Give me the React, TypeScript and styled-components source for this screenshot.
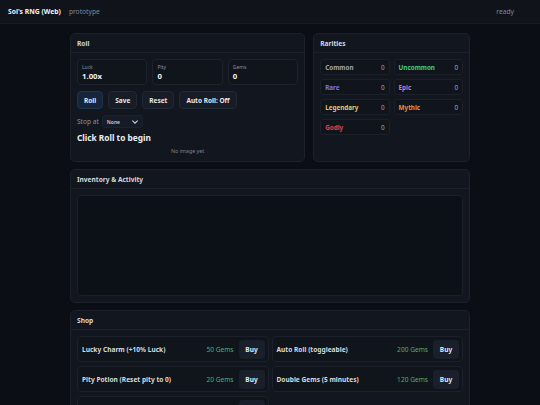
import styled, { createGlobalStyle } from 'styled-components';

const GlobalStyle = createGlobalStyle`
  html, body {
    margin: 0;
    padding: 0;
    background: #0b0e14;
    color: #e5e7eb;
    font-family: "Noto Sans", "Open Sans", sans-serif;
  }
  * { box-sizing: border-box; }
`;

type Rarity = { name: string; color: string; count: number };

const rarities: Rarity[] = [
  { name: 'Common', color: '#a0a6b0', count: 0 },
  { name: 'Uncommon', color: '#3fcf8e', count: 0 },
  { name: 'Rare', color: '#7c74e8', count: 0 },
  { name: 'Epic', color: '#c27cc6', count: 0 },
  { name: 'Legendary', color: '#e7c46e', count: 0 },
  { name: 'Mythic', color: '#e8913f', count: 0 },
  { name: 'Godly', color: '#e0434f', count: 0 },
];

const shopItems = [
  { name: 'Lucky Charm (+10% Luck)', price: 50 },
  { name: 'Auto Roll (toggleable)', price: 200 },
  { name: 'Pity Potion (Reset pity to 0)', price: 20 },
  { name: 'Double Gems (5 minutes)', price: 120 },
  { name: 'Super Luck (+50% Luck, 1 roll)', price: 300 },
];

const App = () => {
  return (
    <>
      <GlobalStyle />
      <TopBar>
        <Brand>
          <span className="title">Sol's RNG (Web)</span>
          <span className="sub">prototype</span>
        </Brand>
        <Status>ready</Status>
      </TopBar>

      <Main>
        <TopGrid>
          <Card>
            <CardHeader>Roll</CardHeader>
            <CardBody>
              <StatsRow>
                <StatBox>
                  <span className="label">Luck</span>
                  <span className="value">1.00x</span>
                </StatBox>
                <StatBox>
                  <span className="label">Pity</span>
                  <span className="value">0</span>
                </StatBox>
                <StatBox>
                  <span className="label">Gems</span>
                  <span className="value">0</span>
                </StatBox>
              </StatsRow>

              <ButtonRow>
                <Button $primary>Roll</Button>
                <Button>Save</Button>
                <Button>Reset</Button>
                <Button>Auto Roll: Off</Button>
              </ButtonRow>

              <StopRow>
                <span>Stop at</span>
                <FakeSelect>
                  <span>None</span>
                  <svg width="6" height="4" viewBox="0 0 10 6">
                    <path
                      d="M1 1l4 4 4-4"
                      fill="none"
                      stroke="#c8ccd4"
                      strokeWidth="1.8"
                      strokeLinecap="round"
                    />
                  </svg>
                </FakeSelect>
              </StopRow>

              <ResultTitle>Click Roll to begin</ResultTitle>
              <NoImage>No image yet</NoImage>
            </CardBody>
          </Card>

          <Card>
            <CardHeader>Rarities</CardHeader>
            <CardBody>
              <RarityGrid>
                {rarities.map((r) => (
                  <RarityCell key={r.name} $color={r.color}>
                    <span className="name">{r.name}</span>
                    <span className="count">{r.count}</span>
                  </RarityCell>
                ))}
              </RarityGrid>
            </CardBody>
          </Card>
        </TopGrid>

        <Card>
          <CardHeader>Inventory &amp; Activity</CardHeader>
          <CardBody>
            <InventoryArea />
          </CardBody>
        </Card>

        <Card>
          <CardHeader>Shop</CardHeader>
          <CardBody>
            <ShopGrid>
              {shopItems.map((item) => (
                <ShopItem key={item.name}>
                  <span className="name">{item.name}</span>
                  <span className="price">{item.price} Gems</span>
                  <BuyButton>Buy</BuyButton>
                </ShopItem>
              ))}
            </ShopGrid>
          </CardBody>
        </Card>
      </Main>
    </>
  );
};

const TopBar = styled.header`
  height: 24px;
  display: flex;
  align-items: center;
  justify-content: space-between;
  padding: 0 26px 0 8px;
  background: #10131a;
  border-bottom: 1px solid #161a22;
`;

const Brand = styled.div`
  display: flex;
  align-items: center;
  gap: 8px;
  .title {
    font-size: 6.8px;
    font-weight: 700;
    color: #f1f3f6;
  }
  .sub {
    font-size: 6.7px;
    color: #7f8794;
  }
`;

const Status = styled.span`
  font-size: 6.7px;
  color: #7f8794;
`;

const Main = styled.main`
  max-width: 400px;
  margin: 0 auto;
  padding: 9px 0 12px;
  display: flex;
  flex-direction: column;
  gap: 7px;
`;

const TopGrid = styled.div`
  display: grid;
  grid-template-columns: 3fr 2fr;
  gap: 8px;
`;

const Card = styled.section`
  background: #12161e;
  border: 1px solid #1c212c;
  border-radius: 5px;
  display: flex;
  flex-direction: column;
`;

const CardHeader = styled.div`
  height: 19px;
  display: flex;
  align-items: center;
  padding: 0 6px;
  font-size: 6.6px;
  font-weight: 700;
  color: #d3d7de;
  border-bottom: 1px solid #1c212c;
`;

const CardBody = styled.div`
  padding: 6px;
  display: flex;
  flex-direction: column;
`;

const StatsRow = styled.div`
  display: grid;
  grid-template-columns: repeat(3, 1fr);
  gap: 5px;
`;

const StatBox = styled.div`
  height: 26px;
  border: 1px solid #1d222d;
  border-radius: 4px;
  background: #10141b;
  padding: 3px 4px;
  display: flex;
  flex-direction: column;
  justify-content: center;
  .label {
    font-size: 5px;
    color: #8a919d;
    line-height: 7px;
  }
  .value {
    font-size: 7.8px;
    font-weight: 700;
    color: #eef0f4;
    line-height: 10px;
  }
`;

const ButtonRow = styled.div`
  display: flex;
  gap: 5px;
  margin-top: 6px;
`;

const Button = styled.button<{ $primary?: boolean }>`
  height: 18px;
  padding: 0 6px;
  border-radius: 4px;
  border: 1px solid ${(p) => (p.$primary ? '#1f3349' : '#212836')};
  background: ${(p) => (p.$primary ? '#15253a' : '#171c27')};
  color: #e4e7ec;
  font-family: inherit;
  font-size: 6.5px;
  font-weight: 700;
`;

const StopRow = styled.div`
  display: flex;
  align-items: center;
  gap: 3px;
  margin-top: 6px;
  font-size: 6.6px;
  color: #8a919d;
`;

const FakeSelect = styled.div`
  width: 41px;
  height: 13px;
  border-radius: 3px;
  background: #161c27;
  border: 1px solid #1b2130;
  display: flex;
  align-items: center;
  justify-content: space-between;
  padding: 0 4px;
  font-size: 5px;
  font-weight: 600;
  color: #c8ccd4;
`;

const ResultTitle = styled.div`
  margin-top: 4px;
  font-size: 8.3px;
  font-weight: 700;
  color: #eceef2;
  line-height: 12px;
`;

const NoImage = styled.div`
  margin-top: 3px;
  text-align: center;
  font-size: 5.3px;
  color: #7d8592;
  line-height: 8px;
`;

const RarityGrid = styled.div`
  display: grid;
  grid-template-columns: 1fr 1fr;
  gap: 4px;
`;

const RarityCell = styled.div<{ $color: string }>`
  height: 16px;
  border: 1px solid #1b202a;
  border-radius: 3px;
  background: #10141b;
  display: flex;
  align-items: center;
  justify-content: space-between;
  padding: 0 4px;
  font-size: 6.3px;
  .name {
    color: ${(p) => p.$color};
    font-weight: 700;
  }
  .count {
    color: #a3a9b3;
  }
`;

const InventoryArea = styled.div`
  height: 101px;
  background: #0c1017;
  border: 1px solid #1a1f29;
  border-radius: 4px;
`;

const ShopGrid = styled.div`
  display: grid;
  grid-template-columns: 1fr 1fr;
  gap: 4px 3px;
`;

const ShopItem = styled.div`
  height: 26px;
  border: 1px solid #1b202a;
  border-radius: 4px;
  background: #10141b;
  display: flex;
  align-items: center;
  gap: 5px;
  padding: 0 3px 0 4px;
  .name {
    flex: 1;
    font-size: 6.6px;
    font-weight: 700;
    color: #d5d9df;
  }
  .price {
    font-size: 6.6px;
    color: #4fae73;
  }
`;

const BuyButton = styled.button`
  width: 26px;
  height: 19px;
  border-radius: 4px;
  border: none;
  background: #1a202b;
  color: #e4e7ec;
  font-family: inherit;
  font-size: 6.5px;
  font-weight: 700;
  padding: 0;
`;

export default App;
